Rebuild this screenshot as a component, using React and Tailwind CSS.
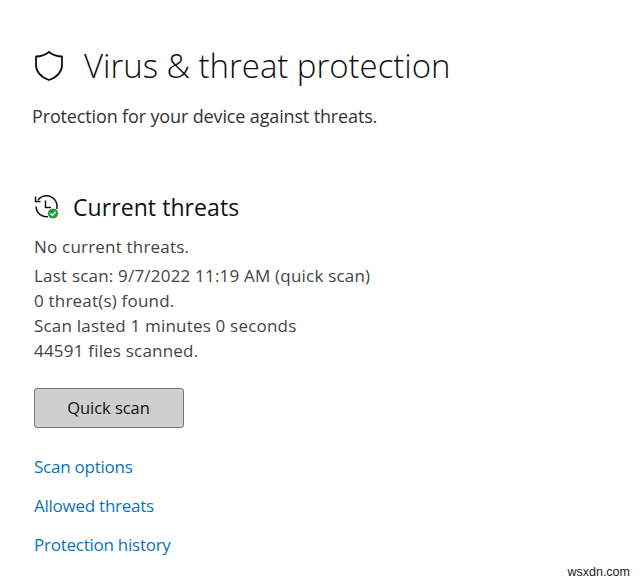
const scanLines = [
  'Last scan: 9/7/2022 11:19 AM (quick scan)',
  '0 threat(s) found.',
  'Scan lasted 1 minutes 0 seconds',
  '44591 files scanned.',
];

const links = ['Scan options', 'Allowed threats', 'Protection history'];

export default function App() {
  return (
    <div className="relative h-[585px] w-[641px] overflow-hidden bg-white pl-[34px] pt-[44px] font-['Open_Sans',sans-serif]">
      <div className="flex h-[44px] items-center">
        <svg width="30" height="32" viewBox="0 0 30 32" fill="none" stroke="#111" strokeWidth="1.8" className="shrink-0">
          <path d="M15 2 C11 5 6 6.5 2 6.5 V15 C2 22 7 27 15 30 C23 27 28 22 28 15 V6.5 C24 6.5 19 5 15 2 Z" strokeLinejoin="round" />
        </svg>
        <h1 className="ml-[20px] text-[33px] font-light leading-[44px] tracking-[-0.04px] text-[#111]">Virus &amp; threat protection</h1>
      </div>
      <p className="-ml-[2px] mt-[16px] text-[18px] leading-[24px] tracking-[-0.14px] text-[#333]">Protection for your device against threats.</p>

      <div className="mt-[63px] flex h-[32px] items-center">
        <svg width="26" height="26" viewBox="0 0 26 26" fill="none" className="shrink-0">
          <path d="M4 6 A10.5 10.5 0 1 1 2 12.5" stroke="#111" strokeWidth="1.5" />
          <path d="M1.5 2.5 V7.5 H6.5" stroke="#111" strokeWidth="1.5" />
          <path d="M11.5 6.5 V13.5 H17" stroke="#111" strokeWidth="1.5" />
          <circle cx="19" cy="19.5" r="5.5" fill="#1f9d3a" stroke="#fff" />
          <path d="M16.5 19.5 L18.5 21.5 L21.7 17.8" stroke="#fff" strokeWidth="1.5" />
        </svg>
        <h2 className="ml-[13px] text-[23px] leading-[32px] tracking-[0.07px] text-[#111]">Current threats</h2>
      </div>

      <p className="mt-[11px] text-[17px] leading-[25px] tracking-[0.2px] text-[#444]">No current threats.</p>
      <div className="mt-[4px] text-[17px] leading-[25px] tracking-[0.2px] text-[#444]">
        {scanLines.map((line) => (
          <p key={line}>{line}</p>
        ))}
      </div>

      <button className="mt-[25px] block h-[40px] w-[150px] rounded-[3px] border border-[#777] bg-[#cfcfcf] pr-[1px] text-[16.5px] tracking-[-0.05px] text-[#111]">
        Quick scan
      </button>

      <div className="mt-[26px] flex flex-col gap-[14px]">
        {links.map((link) => (
          <a key={link} className="text-[17px] leading-[25px] tracking-[-0.25px] text-[#0a74b8]">
            {link}
          </a>
        ))}
      </div>

      <span className="absolute bottom-[3px] right-[11px] font-['Liberation_Sans',sans-serif] text-[12.5px] text-[#222]">wsxdn.com</span>
    </div>
  );
}
